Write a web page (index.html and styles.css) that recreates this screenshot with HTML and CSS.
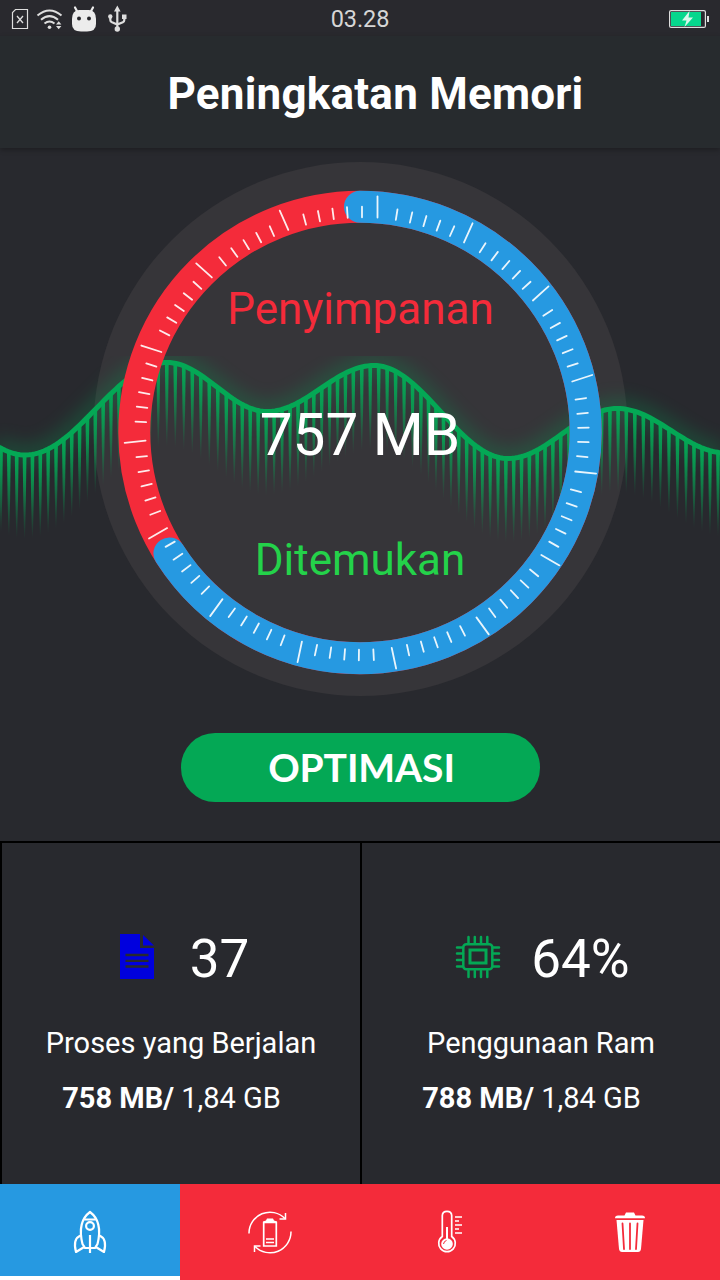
FILE: index.html
```html
<!DOCTYPE html>
<html lang="id">
<head>
<meta charset="utf-8">
<title>Peningkatan Memori</title>
<link rel="stylesheet" href="styles.css">
</head>
<body>
<div class="screen">
  <div class="status">
    <svg class="status-icons" width="130" height="36" viewBox="0 0 130 36">
      <g fill="none" stroke="#dedede">
        <path d="M15.5 8.500H27.500V27.500H12.500V11.500Z" stroke-width="1.200"/>
        <path d="M17 15l6 7M23 15l-6 7" stroke-width="1.300"/>
        <g stroke-width="2">
          <path d="M37.500 14.500Q49.500 4.500 61.500 14.500"/>
          <path d="M41 18.700Q49.500 11.500 58 18.700"/>
          <path d="M44.500 22.500Q49.500 18.500 54.500 22.500"/>
        </g>
      </g>
      <g fill="#dedede">
        <circle cx="49.500" cy="26.300" r="1.800"/>
        <path d="M56 23.500l2.700-3.200 2.700 3.200zM56 25l2.700 3.200 2.700-3.200z"/>
      </g>
      <path d="M72 18Q72 9.500 79 9L89 9Q96 9.500 96 18V23Q96 30.500 87 30.500H81Q72 30.500 72 23Z" fill="#ececec"/>
      <path d="M77.500 11L75 6.500M90.500 11L93 6.500" stroke="#ececec" stroke-width="2.200" stroke-linecap="round"/>
      <circle cx="79" cy="17.500" r="2" fill="#28282d"/><circle cx="89" cy="17.500" r="2" fill="#28282d"/>
      <g fill="none" stroke="#dedede" stroke-width="2.200">
        <path d="M117.300 9V28M110.300 16V19Q110.300 20.500 112 21.300L117.300 23.500L122.800 21.300Q124.300 20.500 124.300 19V15"/>
      </g>
      <path d="M114 10.500L117.300 4.500L120.600 10.500ZM122 13.500h4.500v4.500h-4.500z" fill="#dedede"/>
      <circle cx="110.300" cy="15.500" r="2.200" fill="#dedede"/><circle cx="117.300" cy="28" r="2.700" fill="#dedede"/>
    </svg>
    <span class="clock">03.28</span>
    <svg class="battery" width="40" height="18" viewBox="0 0 40 18">
      <rect x=".6" y=".6" width="35.800" height="16.800" rx="1.500" fill="none" stroke="#dedede" stroke-width="1.200"/>
      <rect x="2" y="2" width="30" height="14" fill="#06d78d"/>
      <path d="M20.500 1L13 10.500H17.500L15.500 17L24 7.500H19.500Z" fill="#d9f8ec"/>
      <rect x="38" y="6" width="2" height="6" fill="#dedede"/>
    </svg>
  </div>

  <header class="header"><h1 class="title">Peningkatan Memori</h1></header>

  <main class="gauge">
    <svg class="dial" width="720" height="560" viewBox="0 148 720 560">
      <defs>
        <linearGradient id="fade" x1="0" y1="0" x2="0" y2="1">
          <stop offset="0" stop-color="#04a855"/>
          <stop offset=".3" stop-color="#04a855" stop-opacity=".8"/>
          <stop offset="1" stop-color="#04a855" stop-opacity="0"/>
        </linearGradient>
        <filter id="glow" filterUnits="userSpaceOnUse" x="-40" y="310" width="800" height="210"><feGaussianBlur stdDeviation="9"/></filter>
        <clipPath id="waveBox"><rect x="0" y="356" width="720" height="190"/></clipPath>
        <g id="ticks">
          <path d="M377.500 196.500V217.500"/>
          <path d="M362 206.700V217.300" transform="rotate(9 362 433.500)"/>
          <path d="M362 206.700V217.300" transform="rotate(12.800 362 433.500)"/>
          <path d="M362 206.700V217.300" transform="rotate(16.500 362 433.500)"/>
          <path d="M362 206.700V217.300" transform="rotate(20.200 362 433.500)"/>
          <path d="M362 206.700V217.300" transform="rotate(24 362 433.500)"/>
        </g>
      </defs>
      <circle cx="360.500" cy="429" r="267" fill="#363539"/>
      <g clip-path="url(#waveBox)">
        <path class="wave-glow" id="waveGlow" filter="url(#glow)"/>
        <g id="bars" fill="url(#fade)"></g>
        <path class="wave" id="wave"/>
      </g>
      <circle cx="360" cy="432.500" r="225.700" class="ring ring-free"/>
      <circle cx="360" cy="432.500" r="225.700" class="ring ring-used" pathLength="100" transform="rotate(-90 360 432.500)"/>
      <g id="dialTicks" stroke="#fff" stroke-opacity=".9" stroke-width="1.800" stroke-linecap="round"></g>
    </svg>
    <div class="label label-storage">Penyimpanan</div>
    <div class="amount">757 MB</div>
    <div class="label label-found">Ditemukan</div>
    <button class="optimize">OPTIMASI</button>
  </main>

  <section class="stats">
    <div class="card">
      <div class="figure figure-proc">
        <svg width="34" height="46" viewBox="0 0 34 46">
          <path d="M0 0H20V14H34V45H0ZM23 1L34 11.500H23Z" fill="#0000de"/>
          <path d="M5.500 21H28.500M5.500 26.800H28.500M5.500 32.500H28.500" stroke="#28292e" stroke-width="2.300"/>
        </svg>
        <span class="number">37</span>
      </div>
      <div class="caption">Proses yang Berjalan</div>
      <div class="usage"><b>758 MB/</b> 1,84 GB</div>
    </div>
    <div class="card">
      <div class="figure figure-ram">
        <svg width="46" height="44" viewBox="0 0 46 44" fill="none" stroke="#04a855">
          <rect x="8.300" y="9.300" width="29" height="25" rx="3" stroke-width="2.500"/>
          <rect x="15" y="15" width="16" height="13" stroke-width="3"/>
          <path d="M13.500 2V8M19.800 2V8M26 2V8M32.300 2V8M13.500 36V42M19.800 36V42M26 36V42M32.300 36V42M2 12.500H8M2 18.500H8M2 25H8M2 31.500H8M38 12.500H44M38 18.500H44M38 25H44M38 31.500H44" stroke-width="2.500" stroke-linecap="round"/>
        </svg>
        <span class="number">64%</span>
      </div>
      <div class="caption">Penggunaan Ram</div>
      <div class="usage"><b>788 MB/</b> 1,84 GB</div>
    </div>
  </section>

  <nav class="tabs">
    <a class="tab tab-active">
      <svg width="48" height="48" viewBox="0 0 48 48" fill="none" stroke="#fff" stroke-width="2.200" stroke-linejoin="round">
        <path d="M24 4C16 10 12.500 20 16.500 36L19 40H29L31.500 36C35.500 20 32 10 24 4Z"/>
        <path d="M18.500 11.500H29.500M24 27V45"/>
        <circle cx="24" cy="18" r="3.900"/>
        <path d="M14.500 27.500Q6.500 31 10 44L19 38.500M33.500 27.500Q41.500 31 38 44L29 38.500"/>
      </svg>
    </a>
    <a class="tab">
      <svg width="48" height="48" viewBox="0 0 48 48" fill="none" stroke="#fff" stroke-width="1.500">
        <path d="M3 25.500A21 21 0 0 1 39 10.500M45 23.500A21 21 0 0 1 9 38.500"/>
        <path d="M39.500 5V11H33.500M8.500 44V38H14.500"/>
        <path d="M17.700 14.500H30.300V38H17.700Z" stroke-width="1.700"/>
        <path d="M20 31H28M20 34.500H28"/>
        <path d="M17 15V13.500L20 12.500 21 10.500H27L28 12.500 31 13.500V15Z" fill="#fff" stroke="none"/>
      </svg>
    </a>
    <a class="tab">
      <svg width="48" height="48" viewBox="0 0 48 48" fill="none" stroke="#fff" stroke-width="1.700">
        <path d="M16.300 28.500V7.500Q16.500 3.300 21 3.300Q25.500 3.300 25.700 7.500V28.500A8.300 8.300 0 1 1 16.300 28.500Z"/>
        <path d="M21 19V31" stroke-width="2"/>
        <circle cx="21" cy="36" r="5.800" fill="#fff" stroke="none"/>
        <path d="M17.500 36Q18 33 20.500 32.500" stroke="#f42b3a" stroke-width="1"/>
        <path d="M29 9H36M29 13H33M29 17H36M29 21H33M29 25H36"/>
      </svg>
    </a>
    <a class="tab">
      <svg width="48" height="48" viewBox="0 0 48 48">
        <path d="M9 10.200Q9 7.500 12 7.500H18.500L20 4.500H28L29.500 7.500H36Q39 7.500 39 10.200Z" fill="#fff"/>
        <path d="M10.500 12H37.500L35 41Q34.500 44 32 44H16Q13.500 44 13 41Z" fill="#fff"/>
        <path d="M16.500 15.500L18 41M24 15.500V41M31.500 15.500L30 41" stroke="#f42b3a" stroke-width="1.800" stroke-linecap="round"/>
      </svg>
    </a>
  </nav>
</div>
<script src="script.js"></script>
</body>
</html>
```
FILE: styles.css
```css
body { margin: 0; background: #28292e; }
.screen {
  width: 720px; height: 1280px; overflow: hidden;
  display: flex; flex-direction: column;
  background: #28292e; color: #fff;
  font-family: Roboto, "Noto Sans", sans-serif;
}
.status {
  height: 36px; flex: none;
  display: grid; grid-template-columns: 1fr auto 1fr; align-items: center;
  background: #29292e;
}
.status-icons { display: block; }
.clock { font-size: 23.500px; line-height: 36px; color: #d6d6d6; padding-top: 1px; letter-spacing: -.1px; }
.battery { justify-self: end; margin-right: 11px; }
.header {
  height: 112px; flex: none; position: relative;
  display: flex; align-items: center; justify-content: center;
  background: #272b2e;
  box-shadow: 0 2px 5px rgba(0, 0, 0, .28);
}
.title { margin: 4px 0 0 31px; font-size: 44px; font-weight: 700; line-height: 52px; letter-spacing: .22px; }
.gauge {
  position: relative; box-sizing: border-box; height: 693px; flex: none;
  display: flex; flex-direction: column; align-items: center;
  padding-top: 136px;
}
.dial { position: absolute; left: 0; top: 0; z-index: 0; }
.label, .amount, .optimize { position: relative; }
.label { font-size: 44px; line-height: 50px; }
.label-storage { color: #f42b3a; padding-left: 1px; }
.label-found { color: #24d24a; margin-top: 65px; }
.amount { font-size: 58.500px; line-height: 70px; margin-top: 66px; }
.optimize {
  margin-top: 148px; width: 359px; height: 69px; padding: 0 0 0 3px; border: 0;
  border-radius: 34px; background: #04a855; color: #fff;
  font: 700 39px/67px Lato, sans-serif; letter-spacing: -.1px;
}
.ring { fill: none; stroke-width: 32; }
.ring-free { stroke: #f42b3a; }
.ring-used { stroke: #2699e1; stroke-linecap: round; stroke-dasharray: 66 100; }
.wave { fill: none; stroke: #04a855; stroke-width: 5; }
.wave-glow { fill: none; stroke: #04a855; stroke-width: 20; opacity: .25; }
.stats { height: 343px; flex: none; display: grid; grid-template-columns: 1fr 1fr; }
.card {
  box-sizing: border-box; border: solid #000; border-width: 2px 0 0 2px;
  display: flex; flex-direction: column; align-items: center; padding-top: 84px;
}
.figure { display: flex; align-items: center; height: 60px; }
.figure-proc { gap: 36px; padding-left: 7px; }
.figure-ram { gap: 30px; padding-left: 3px; }
.number { font-size: 53px; line-height: 60px; padding-top: 4px; }
.caption { margin-top: 38px; font-size: 29px; line-height: 36px; white-space: nowrap; }
.usage { margin-top: 19px; margin-right: 19px; font-size: 29px; line-height: 36px; white-space: nowrap; }
.tabs { height: 96px; flex: none; display: grid; grid-template-columns: repeat(4, 1fr); background: #f42b3a; }
.tab { display: flex; align-items: center; justify-content: center; }
.tab-active { box-sizing: border-box; background: #2699e1; border-bottom: 4px solid #fff; padding-top: 4px; }
```
FILE: script.js
```js
const NS = "http://www.w3.org/2000/svg";

// Crests and troughs of the wave, joined by cosine easing.
const extremes = [[-80, 400], [25, 455], [167, 362.5], [267, 411.5], [374, 365.5], [508, 458.5], [617, 408.5], [726, 453]];
function waveY(x) {
  for (let i = 1; i < extremes.length; i++) {
    const [x0, y0] = extremes[i - 1], [x1, y1] = extremes[i];
    if (x <= x1) return y0 + (y1 - y0) * (1 - Math.cos(Math.PI * (x - x0) / (x1 - x0))) / 2;
  }
  return extremes[extremes.length - 1][1];
}

let d = "";
for (let x = -4; x <= 724; x += 3) d += (d ? "L" : "M") + x + " " + waveY(x).toFixed(2);
document.getElementById("wave").setAttribute("d", d);
document.getElementById("waveGlow").setAttribute("d", d);

// Bars: [start, end, number of steps].
const runs = [[1, 111, 14], [111, 158.3, 6], [158.3, 226.3, 8], [226.3, 298, 9], [298, 353.3, 7], [353.3, 421, 8], [421, 451, 4], [451, 560.7, 14], [560.7, 626.3, 8], [626.3, 686, 7], [686, 726, 5]];
const bars = document.getElementById("bars");
for (const [a, b, n] of runs) {
  for (let i = 0; i < n; i++) {
    const x = a + (b - a) * i / n, y = waveY(x);
    const p = document.createElementNS(NS, "path");
    p.setAttribute("d", `M${x - 1.9} ${y}H${x + 1.9}L${x + 1.3} ${y + 45}L${x + .4} ${y + 84}H${x - .4}L${x - 1.3} ${y + 45}Z`);
    bars.appendChild(p);
  }
}

const dial = document.getElementById("dialTicks");
for (let i = 0; i < 15; i++) {
  const u = document.createElementNS(NS, "use");
  u.setAttribute("href", "#ticks");
  u.setAttribute("transform", `rotate(${i * 24} 362 433.5)`);
  dial.appendChild(u);
}
```
